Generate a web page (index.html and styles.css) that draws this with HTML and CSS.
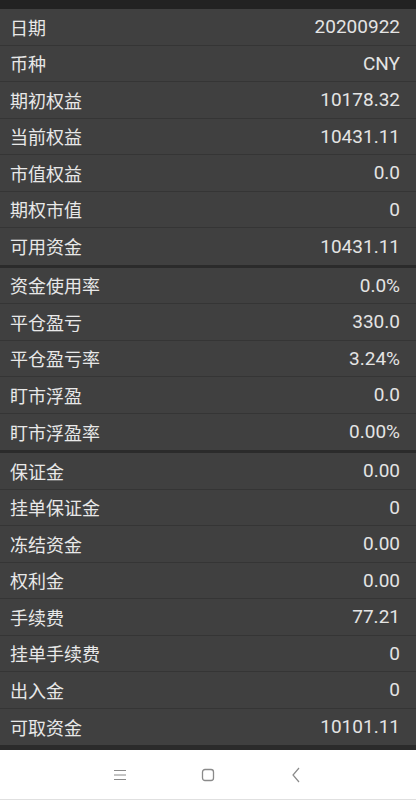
FILE: index.html
```html
<!DOCTYPE html>
<html>

<head>
    <title>资金详情</title>
    <link rel="stylesheet" href="styles.css">
</head>

<body>
    <div class="screen">
        <div class="status-strip"></div>
        <div class="list">
            <div class="group">
                <div class="row"><span class="label">日期</span><span class="value">20200922</span></div>
                <div class="row"><span class="label">币种</span><span class="value">CNY</span></div>
                <div class="row"><span class="label">期初权益</span><span class="value">10178.32</span></div>
                <div class="row"><span class="label">当前权益</span><span class="value">10431.11</span></div>
                <div class="row"><span class="label">市值权益</span><span class="value">0.0</span></div>
                <div class="row"><span class="label">期权市值</span><span class="value">0</span></div>
                <div class="row"><span class="label">可用资金</span><span class="value">10431.11</span></div>
            </div>
            <div class="group">
                <div class="row"><span class="label">资金使用率</span><span class="value">0.0%</span></div>
                <div class="row"><span class="label">平仓盈亏</span><span class="value">330.0</span></div>
                <div class="row"><span class="label">平仓盈亏率</span><span class="value">3.24%</span></div>
                <div class="row"><span class="label">盯市浮盈</span><span class="value">0.0</span></div>
                <div class="row"><span class="label">盯市浮盈率</span><span class="value">0.00%</span></div>
            </div>
            <div class="group">
                <div class="row"><span class="label">保证金</span><span class="value">0.00</span></div>
                <div class="row"><span class="label">挂单保证金</span><span class="value">0</span></div>
                <div class="row"><span class="label">冻结资金</span><span class="value">0.00</span></div>
                <div class="row"><span class="label">权利金</span><span class="value">0.00</span></div>
                <div class="row"><span class="label">手续费</span><span class="value">77.21</span></div>
                <div class="row"><span class="label">挂单手续费</span><span class="value">0</span></div>
                <div class="row"><span class="label">出入金</span><span class="value">0</span></div>
                <div class="row"><span class="label">可取资金</span><span class="value">10101.11</span></div>
            </div>
        </div>
        <div class="nav-bar">
            <div class="nav-btn">
                <svg width="14" height="12" viewBox="0 0 14 12">
                    <path d="M1 1.5H13M1 6H13M1 10.5H13" stroke="#8a8a8a" stroke-width="1.2" fill="none" />
                </svg>
            </div>
            <div class="nav-btn">
                <svg width="14" height="14" viewBox="0 0 14 14">
                    <rect x="1.5" y="1.5" width="11" height="11" rx="2.5" stroke="#8a8a8a" stroke-width="1.3" fill="none" />
                </svg>
            </div>
            <div class="nav-btn">
                <svg width="10" height="16" viewBox="0 0 10 16">
                    <path d="M8 1L2 8L8 15" stroke="#8a8a8a" stroke-width="1.2" fill="none" />
                </svg>
            </div>
        </div>
    </div>
</body>

</html>
```

FILE: styles.css
```css
* {
    margin: 0;
    padding: 0;
    box-sizing: border-box;
}

body {
    font-family: Roboto, "Noto Sans CJK SC", sans-serif;
    background: #2b2b2b;
    color: #e6e6e6;
    width: 416px;
    height: 800px;
    overflow: hidden;
}

.screen {
    display: flex;
    flex-direction: column;
    height: 800px;
}

.status-strip {
    height: 9px;
    background: #222;
}

.list {
    display: flex;
    flex-direction: column;
    gap: 3px;
    background: #2b2b2b;
    padding-bottom: 5px;
}

.group {
    background: #404040;
}

.row {
    height: 36.5px;
    display: flex;
    align-items: center;
    justify-content: space-between;
    padding: 0 16px 0 10px;
    border-bottom: 1px solid #353535;
    font-size: 18px;
}

.row:last-child {
    border-bottom: none;
}

.label {
    font-family: "Noto Sans CJK SC", sans-serif;
    color: #e8e8e8;
}

.value {
    font-family: Roboto, sans-serif;
    font-size: 19px;
    color: #e4e4e4;
}

.nav-bar {
    flex: 1;
    background: #fff;
    border-bottom: 1px solid #e0e0e0;
    display: flex;
    justify-content: center;
    align-items: center;
}

.nav-btn {
    width: 88px;
    display: flex;
    justify-content: center;
    align-items: center;
}
```
